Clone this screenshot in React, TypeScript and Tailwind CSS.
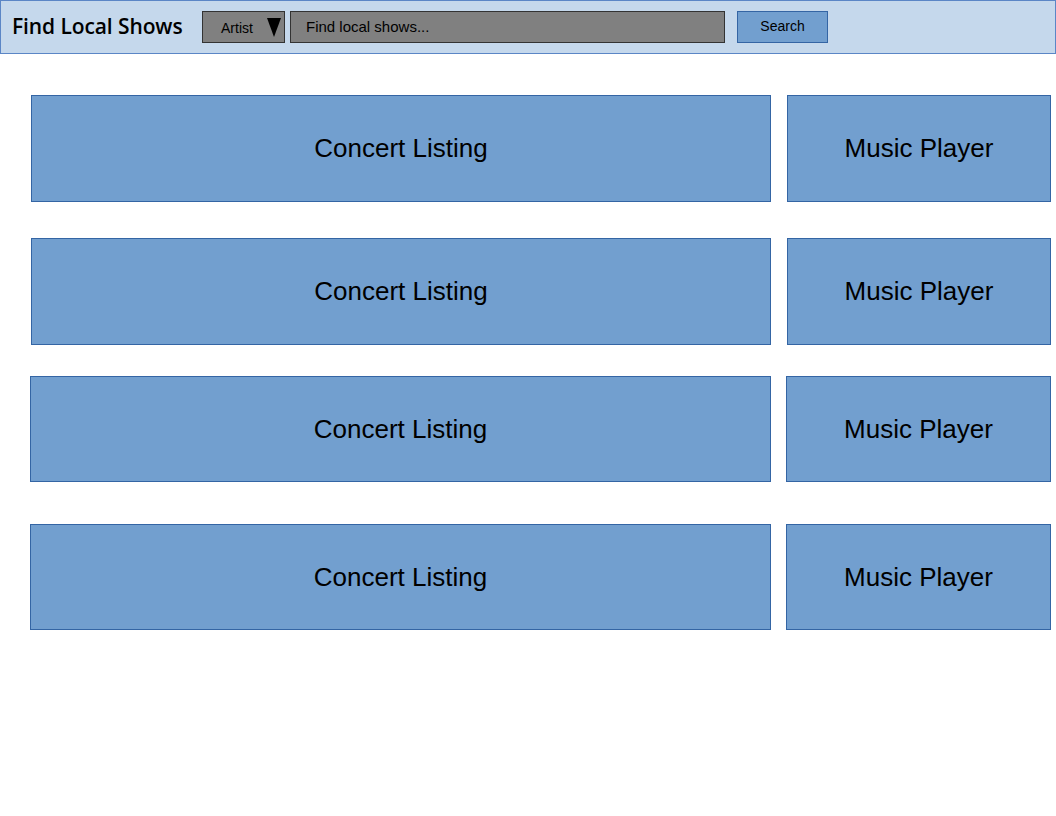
const rows = [
  { mt: 'mt-[41px]', ml: 'ml-[31px]', gap: 'gap-[16px]', concert: 'w-[740px]', player: 'w-[264px]', h: 'h-[107px]' },
  { mt: 'mt-[36px]', ml: 'ml-[31px]', gap: 'gap-[16px]', concert: 'w-[740px]', player: 'w-[264px]', h: 'h-[107px]' },
  { mt: 'mt-[31px]', ml: 'ml-[30px]', gap: 'gap-[15px]', concert: 'w-[741px]', player: 'w-[265px]', h: 'h-[106px]' },
  { mt: 'mt-[42px]', ml: 'ml-[30px]', gap: 'gap-[15px]', concert: 'w-[741px]', player: 'w-[265px]', h: 'h-[106px]' },
];

export default function App() {
  return (
    <div className="h-[816px] w-[1056px] bg-white font-['Liberation_Sans',Arial,sans-serif] text-black">
      {/* top bar */}
      <div className="flex h-[54px] items-center border border-[#5b86c6] bg-[#c5d8ec]">
        <h1 className="ml-[11px] w-[190px] font-['Open_Sans',sans-serif] text-[21px] font-semibold tracking-[-0.1px] text-black">
          Find Local Shows
        </h1>
        <div className="flex h-[32px] w-[83px] items-center border border-[#333333] bg-[#808080]">
          <span className="ml-[18px] mt-[2px] text-[14px]">Artist</span>
          <svg className="ml-auto mr-[3px]" width="14" height="20" viewBox="0 0 14 20">
            <polygon points="0,1 14,1 7,20" fill="#000" />
          </svg>
        </div>
        <div className="ml-[5px] flex h-[32px] w-[435px] items-center border border-[#333333] bg-[#808080] pl-[15px] pt-[1px] text-[15px]">
          Find local shows...
        </div>
        <button className="ml-[12px] flex h-[32px] w-[91px] items-center justify-center border border-[#3465a4] bg-[#729fcf] pb-[2px] text-[14px]">
          Search
        </button>
      </div>

      {rows.map((r, i) => (
        <div key={i} className={`flex ${r.gap} ${r.mt} ${r.ml}`}>
          <div className={`flex ${r.concert} ${r.h} items-center justify-center border border-[#3465a4] bg-[#729fcf] text-[26px]`}>
            Concert Listing
          </div>
          <div className={`flex ${r.player} ${r.h} items-center justify-center border border-[#3465a4] bg-[#729fcf] text-[26px]`}>
            Music Player
          </div>
        </div>
      ))}
    </div>
  );
}
